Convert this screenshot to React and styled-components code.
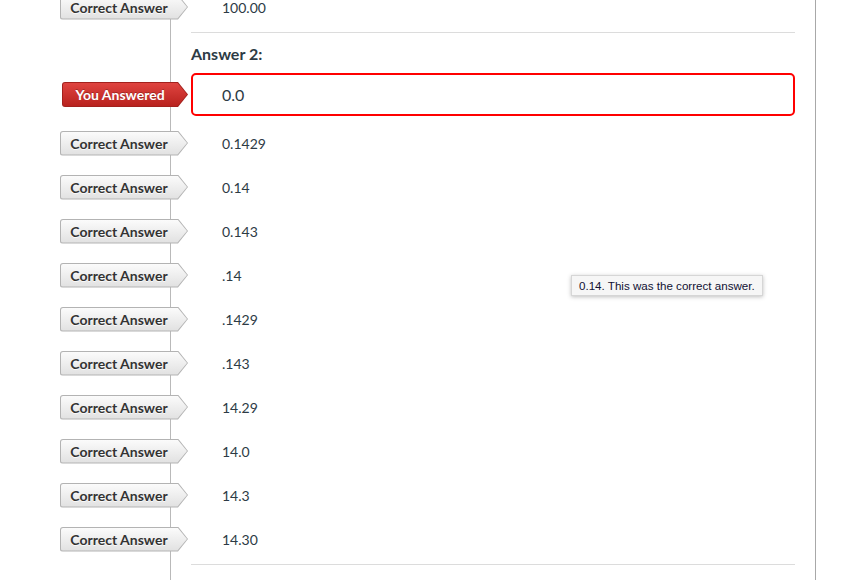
import React from "react";
import styled, { createGlobalStyle } from "styled-components";

const GlobalStyle = createGlobalStyle`
  html, body {
    margin: 0;
    padding: 0;
    background: #fff;
    overflow: hidden;
  }
  body {
    font-family: Lato, "Open Sans", sans-serif;
    color: #2d3b45;
  }
`;

const Page = styled.div`
  position: relative;
  width: 795px;
  height: 580px;
  padding-right: 20px;
  border-right: 1px solid #a8a8a8;
  overflow: hidden;
`;

const Answers = styled.div`
  margin-top: -15px;
  min-height: 620px;
  background: linear-gradient(#b9b9b9, #b9b9b9) no-repeat 170px 0 / 1px 100%;
`;

const Row = styled.div`
  display: flex;
  align-items: center;
  height: ${(p) => p.$height || 44}px;
`;

const Spacer = styled.div`
  height: ${(p) => p.$size}px;
`;

const LabelCell = styled.div`
  width: 188px;
  padding-right: 3px;
  display: flex;
  justify-content: flex-end;
`;

const Label = styled.span`
  position: relative;
  z-index: 0;
  display: inline-flex;
  align-items: center;
  justify-content: center;
  box-sizing: border-box;
  width: ${(p) => p.$width}px;
  height: 25px;
  padding-right: 10px;
  font-size: 14px;
  font-weight: 700;
  color: ${(p) => (p.$wrong ? "#fff" : "#333")};
  text-shadow: ${(p) =>
    p.$wrong ? "0 -1px 0 rgba(0,0,0,0.25)" : "0 1px 0 rgba(255,255,255,0.8)"};

  &::before,
  &::after {
    content: "";
    position: absolute;
    z-index: -1;
    border-radius: 3px 0 0 3px;
  }
  &::before {
    inset: 0;
    background: ${(p) => (p.$wrong ? "#a3211d" : "#b3b3b3")};
    clip-path: polygon(0 0, calc(100% - 10px) 0, 100% 50%, calc(100% - 10px) 100%, 0 100%);
  }
  &::after {
    inset: 1px;
    border-radius: 2px 0 0 2px;
    background: ${(p) =>
      p.$wrong
        ? "linear-gradient(#df4440, #b9221e)"
        : "linear-gradient(#fbfbfb, #e1e1e1)"};
    clip-path: polygon(0 0, calc(100% - 9.5px) 0, 100% 50%, calc(100% - 9.5px) 100%, 0 100%);
  }
`;

const Value = styled.div`
  flex: 1;
  padding-left: 31px;
  font-size: 14px;
  color: #2d3b45;
`;

const AnswerBox = styled.div`
  flex: 1;
  box-sizing: border-box;
  height: 100%;
  display: flex;
  align-items: center;
  padding-left: 29px;
  border: 2px solid #f00;
  border-radius: 5px;
  font-size: 16px;
  color: #2d3b45;
`;

const Divider = styled.hr`
  margin: 3px 0 0 191px;
  border: 0;
  border-top: 1px solid #dcdcdc;
  height: 0;
`;

const Heading = styled.div`
  display: flex;
  align-items: center;
  height: 40px;
  padding-left: 191px;
  font-size: 16px;
  font-weight: 700;
  color: #2d3b45;
`;

const Tooltip = styled.div`
  position: absolute;
  left: 571px;
  top: 275px;
  height: 21px;
  box-sizing: border-box;
  display: flex;
  align-items: center;
  padding: 0 7px;
  background: #f6f6f6;
  border: 1px solid #d6d6d6;
  box-shadow: 0 1px 4px rgba(0, 0, 0, 0.25);
  font-family: "Liberation Sans", Arial, sans-serif;
  font-size: 11.6px;
  color: #111133;
  white-space: nowrap;
`;

const correct = ["0.1429", "0.14", "0.143", ".14", ".1429", ".143", "14.29", "14.0", "14.3", "14.30"];

const CorrectRow = ({ value }) => (
  <Row>
    <LabelCell>
      <Label $width={128}>Correct Answer</Label>
    </LabelCell>
    <Value>{value}</Value>
  </Row>
);

export default function App() {
  return (
    <>
      <GlobalStyle />
      <Page>
        <Answers>
          <CorrectRow value="100.00" />
          <Divider />
          <Heading>Answer 2:</Heading>
          <Row $height={43}>
            <LabelCell>
              <Label $width={126} $wrong>You Answered</Label>
            </LabelCell>
            <AnswerBox>0.0</AnswerBox>
          </Row>
          <Spacer $size={5} />
          {correct.map((v, i) => (
            <CorrectRow key={i} value={v} />
          ))}
          <Divider />
        </Answers>
        <Tooltip>0.14. This was the correct answer.</Tooltip>
      </Page>
    </>
  );
}
